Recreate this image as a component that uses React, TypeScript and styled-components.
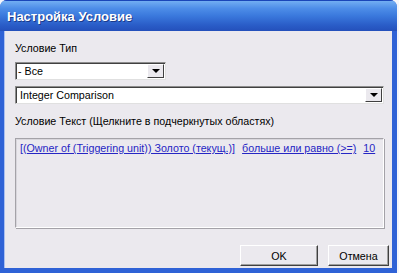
import styled, { createGlobalStyle } from "styled-components"

const GlobalStyle = createGlobalStyle`
	html, body {
		margin: 0;
		padding: 0;
		background: #f4f6fb;
	}
	body {
		font-family: "Liberation Sans", Arial, sans-serif;
		font-size: 10.7px;
		color: #000;
	}
`

const Window = styled.div`
	width: 397px;
	height: 273px;
	display: flex;
	flex-direction: column;
	box-sizing: border-box;
	border-radius: 7px 7px 0 0;
	overflow: hidden;
	background: #2f62d6;
`

const TitleBar = styled.div`
	height: 31px;
	flex: none;
	display: flex;
	align-items: center;
	padding: 0 7px;
	box-sizing: border-box;
	border-top: 1px solid #1a46b8;
	background: linear-gradient(
		to bottom,
		#72aef2 0%,
		#4d8de8 25%,
		#3a78dc 50%,
		#2a5dc8 80%,
		#2450bb 100%
	);
`

const Title = styled.span`
	font-family: "Liberation Sans", Arial, sans-serif;
	font-weight: bold;
	font-size: 13px;
	color: #fff;
	text-shadow: 1px 1px 0 #1a3a8a;
`

const Body = styled.div`
	flex: 1;
	margin: 0 5px 5px 4px;
	padding: 11px 8px 0 11px;
	background: #ebe9ee;
	display: flex;
	flex-direction: column;
	box-shadow: inset 1px 0 0 #a9bff0;
`

const Label = styled.div<{ $gap: number }>`
	line-height: 13px;
	height: 13px;
	margin-bottom: ${p => p.$gap}px;
	white-space: nowrap;
`

const Combo = styled.div<{ $width?: number; $mb?: number }>`
	width: ${p => (p.$width ? `${p.$width}px` : "100%")};
	height: 18px;
	box-sizing: border-box;
	display: flex;
	align-items: stretch;
	background: #fff;
	border-top: 1px solid #8d8d8d;
	border-left: 1px solid #8d8d8d;
	border-right: 1px solid #e0e0e0;
	border-bottom: 1px solid #e0e0e0;
	box-shadow: inset 1px 1px 0 #404040;
	margin-bottom: ${p => p.$mb || 0}px;
`

const ComboText = styled.div<{ $pad: number }>`
	flex: 1;
	display: flex;
	align-items: center;
	padding-left: ${p => p.$pad}px;
	white-space: nowrap;
`

const ArrowButton = styled.div`
	width: 17px;
	margin: 1px 1px 1px 0;
	box-sizing: border-box;
	background: #ebe9ee;
	border-top: 1px solid #fff;
	border-left: 1px solid #fff;
	border-right: 1px solid #404040;
	border-bottom: 1px solid #404040;
	display: flex;
	align-items: center;
	justify-content: center;
`

const Arrow = styled.div`
	width: 0;
	height: 0;
	border-left: 4px solid transparent;
	border-right: 4px solid transparent;
	border-top: 4px solid #000;
`

const TextBox = styled.div`
	height: 90px;
	margin-top: 2px;
	box-sizing: border-box;
	border-top: 1px solid #a4a2a8;
	border-left: 1px solid #a4a2a8;
	border-right: 1px solid #fff;
	border-bottom: 1px solid #fff;
	box-shadow: inset 1px 1px 0 #d8d6dc, 1px 1px 0 #a4a2a8;
	padding: 3px 4px;
	display: flex;
	align-items: flex-start;
	gap: 7px;
	white-space: nowrap;
`

const Link = styled.span`
	color: #2626c4;
	text-decoration: underline;
	line-height: 13px;
	cursor: pointer;
`

const ButtonRow = styled.div`
	display: flex;
	justify-content: flex-end;
	gap: 10px;
	margin-top: 17px;
	margin-right: -5px;
`

const Button = styled.button<{ $width: number }>`
	width: ${p => p.$width}px;
	height: 21px;
	font-family: "Liberation Sans", Arial, sans-serif;
	font-size: 10.7px;
	color: #000;
	background: #ebe9ee;
	border-top: 1px solid #fff;
	border-left: 1px solid #fff;
	border-right: 1px solid #404040;
	border-bottom: 1px solid #404040;
	box-shadow: inset -1px -1px 0 #a0a0a0;
	padding: 0;
`

export default function App() {
	return (
		<>
			<GlobalStyle />
			<Window>
				<TitleBar>
					<Title>Настройка Условие</Title>
				</TitleBar>
				<Body>
					<Label $gap={7}>Условие Тип</Label>
					<Combo $width={151} $mb={6}>
						<ComboText $pad={2}>- Все</ComboText>
						<ArrowButton><Arrow /></ArrowButton>
					</Combo>
					<Combo $mb={11}>
						<ComboText $pad={4}>Integer Comparison</ComboText>
						<ArrowButton><Arrow /></ArrowButton>
					</Combo>
					<Label $gap={8}>Условие Текст (Щелкните в подчеркнутых областях)</Label>
					<TextBox>
						<Link>[(Owner of (Triggering unit)) Золото (текущ.)]</Link>
						<Link>больше или равно (&gt;=)</Link>
						<Link>10</Link>
					</TextBox>
					<ButtonRow>
						<Button $width={78}>OK</Button>
						<Button $width={61}>Отмена</Button>
					</ButtonRow>
				</Body>
			</Window>
		</>
	)
}
